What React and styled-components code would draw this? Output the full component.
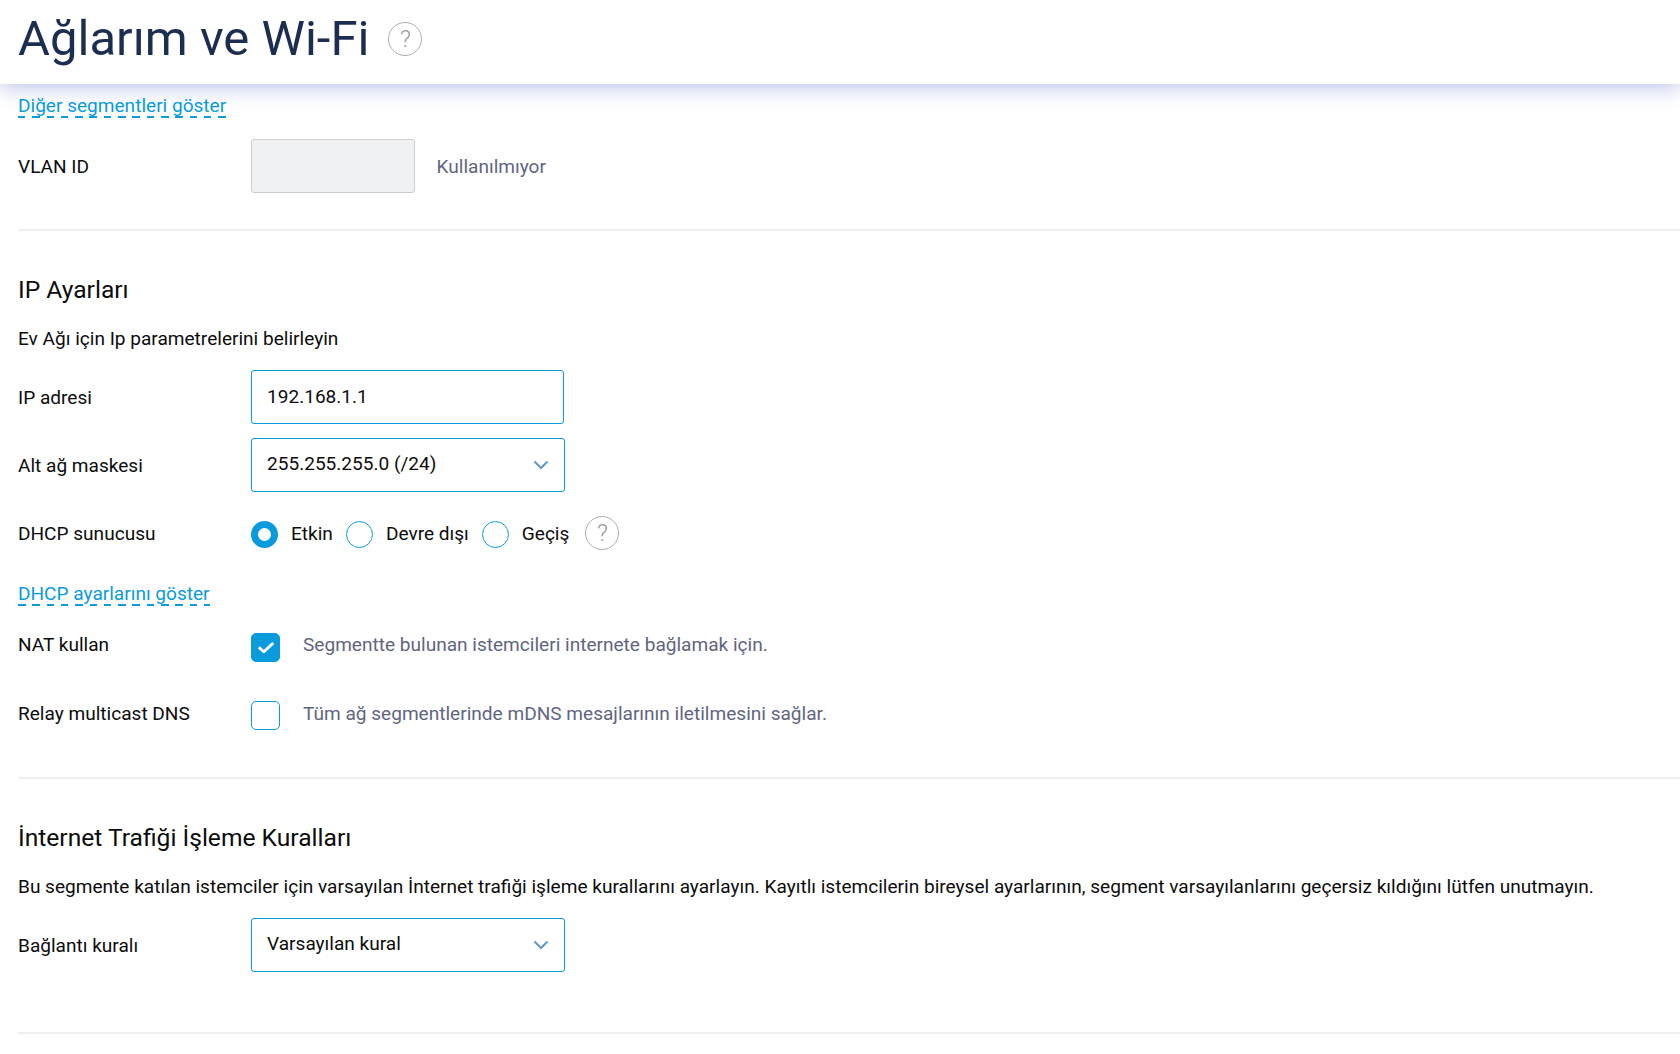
import React from 'react';
import styled, { createGlobalStyle } from 'styled-components';

const Global = createGlobalStyle`
  html, body {
    margin: 0;
    padding: 0;
    background: #fff;
  }
  body {
    font-family: Roboto, "Noto Sans", sans-serif;
    font-size: 19.07px;
    line-height: 21px;
    color: #0c0c0c;
    overflow: hidden;
  }
`;

const Page = styled.div`
  height: 1054px;
  overflow: hidden;
`;

const Header = styled.header`
  position: relative;
  z-index: 0;
  box-sizing: border-box;
  height: 84px;
  padding: 0 0 6px 18px;
  display: flex;
  align-items: center;
  gap: 19px;
  background: #fff;
  box-shadow: 0 4px 20px rgba(80, 100, 200, 0.38);
`;

const Title = styled.h1`
  margin: 0;
  font-size: 49px;
  line-height: 76px;
  font-weight: 400;
  color: #1b2d50;
`;

const Help = styled.span`
  flex: none;
  box-sizing: border-box;
  width: 34px;
  height: 34px;
  display: flex;
  align-items: center;
  justify-content: center;
  border: 1.5px solid #adadad;
  border-radius: 50%;
  font-size: 24px;
  font-weight: 300;
  color: #9a9a9a;
`;

const Content = styled.main`
  position: relative;
  z-index: 1;
  padding-left: 18px;
`;

const Toggle = styled.a`
  display: inline-block;
  color: #0a9bdc;
  padding-bottom: 2px;
  line-height: 22px;
  margin-top: ${p => p.$top}px;
  background: repeating-linear-gradient(90deg, #0a9bdc 0 7.5px, transparent 7.5px 14.3px) left bottom 1px / 100% 2px no-repeat;
`;

const Row = styled.div`
  display: flex;
  align-items: center;
  height: ${p => p.$height || 54}px;
  margin-top: ${p => p.$top || 0}px;
`;

const Label = styled.div`
  flex: none;
  width: 233px;
`;

const Field = styled.div`
  box-sizing: border-box;
  width: ${p => p.$width}px;
  height: 54px;
  padding: 0 15px ${p => p.$lift ?? 3}px;
  display: flex;
  align-items: center;
  justify-content: space-between;
  border: 1px solid #0a9bdc;
  border-radius: 3px;
  background: #fff;
`;

const DisabledField = styled.div`
  box-sizing: border-box;
  width: 164px;
  height: 54px;
  border: 1px solid #ccc;
  border-radius: 3px;
  background: #f0f1f3;
`;

const Hint = styled.span`
  color: #5f6580;
  margin-left: ${p => p.$left || 0}px;
`;

const Chevron = styled.svg`
  flex: none;
  width: 16px;
  height: 10px;
  margin: 3px 0 0;
  fill: none;
  stroke: #5f97cc;
  stroke-width: 2;
`;

const Divider = styled.hr`
  margin: ${p => p.$top}px 0 0;
  border: 0;
  height: 2px;
  background: #eee;
`;

const Heading = styled.h2`
  margin: ${p => p.$top}px 0 0;
  font-size: 24.6px;
  line-height: 30px;
  font-weight: 400;
`;

const Text = styled.p`
  margin: ${p => p.$top}px 0 0;
`;

const Radios = styled.div`
  display: flex;
  align-items: center;
`;

const Radio = styled.span`
  flex: none;
  box-sizing: border-box;
  width: 27px;
  height: 27px;
  margin: 2px 13px 0 0;
  border-radius: 50%;
  border: ${p => (p.$on ? '7.5px solid #0a9bdc' : '1px solid #0a9bdc')};
  background: #fff;
`;

const RadioText = styled.span`
  margin-right: ${p => p.$right}px;
`;

const Check = styled.span`
  flex: none;
  box-sizing: border-box;
  width: 29px;
  height: 29px;
  margin: ${p => (p.$on ? 6 : 5)}px 23px 0 0;
  display: flex;
  align-items: center;
  justify-content: center;
  border: 1px solid #0a9bdc;
  border-radius: 5px;
  background: ${p => (p.$on ? '#0a9bdc' : '#fff')};
  svg {
    width: 16px;
    height: 11px;
    fill: none;
    stroke: #fff;
    stroke-width: 2.8;
  }
`;

const ArrowDown = () => (
  <Chevron viewBox="0 0 16 10">
    <path d="M1.5 1.5 L8 8 L14.5 1.5" />
  </Chevron>
);

export default function App() {
  return (
    <Page>
      <Global />
      <Header>
        <Title>Ağlarım ve Wi-Fi</Title>
        <Help>?</Help>
      </Header>
      <Content>
        <Toggle $top={11}>Diğer segmentleri göster</Toggle>
        <Row $top={20}>
          <Label>VLAN ID</Label>
          <DisabledField />
          <Hint $left={21.5}>Kullanılmıyor</Hint>
        </Row>
        <Divider $top={36} />
        <Heading $top={44}>IP Ayarları</Heading>
        <Text $top={23}>Ev Ağı için Ip parametrelerini belirleyin</Text>
        <Row $top={21}>
          <Label>IP adresi</Label>
          <Field $width={313} $lift={1}>192.168.1.1</Field>
        </Row>
        <Row $top={14}>
          <Label>Alt ağ maskesi</Label>
          <Field $width={314}>
            255.255.255.0 (/24)
            <ArrowDown />
          </Field>
        </Row>
        <Row $top={14}>
          <Label>DHCP sunucusu</Label>
          <Radios>
            <Radio $on />
            <RadioText $right={13}>Etkin</RadioText>
            <Radio />
            <RadioText $right={13}>Devre dışı</RadioText>
            <Radio />
            <RadioText $right={16}>Geçiş</RadioText>
            <Help>?</Help>
          </Radios>
        </Row>
        <Toggle $top={23}>DHCP ayarlarını göster</Toggle>
        <Row $top={20} $height={34}>
          <Label>NAT kullan</Label>
          <Check $on>
            <svg viewBox="0 0 16 11">
              <path d="M0.8 5.4 L5.8 9.8 L15.2 1" />
            </svg>
          </Check>
          <Hint>Segmentte bulunan istemcileri internete bağlamak için.</Hint>
        </Row>
        <Row $top={35} $height={34}>
          <Label>Relay multicast DNS</Label>
          <Check />
          <Hint>Tüm ağ segmentlerinde mDNS mesajlarının iletilmesini sağlar.</Hint>
        </Row>
        <Divider $top={47} />
        <Heading $top={44}>İnternet Trafiği İşleme Kuralları</Heading>
        <Text $top={23}>
          Bu segmente katılan istemciler için varsayılan İnternet trafiği işleme kurallarını ayarlayın. Kayıtlı istemcilerin bireysel ayarlarının, segment varsayılanlarını geçersiz kıldığını lütfen unutmayın.
        </Text>
        <Row $top={21}>
          <Label>Bağlantı kuralı</Label>
          <Field $width={314}>
            Varsayılan kural
            <ArrowDown />
          </Field>
        </Row>
        <Divider $top={60} />
      </Content>
    </Page>
  );
}
